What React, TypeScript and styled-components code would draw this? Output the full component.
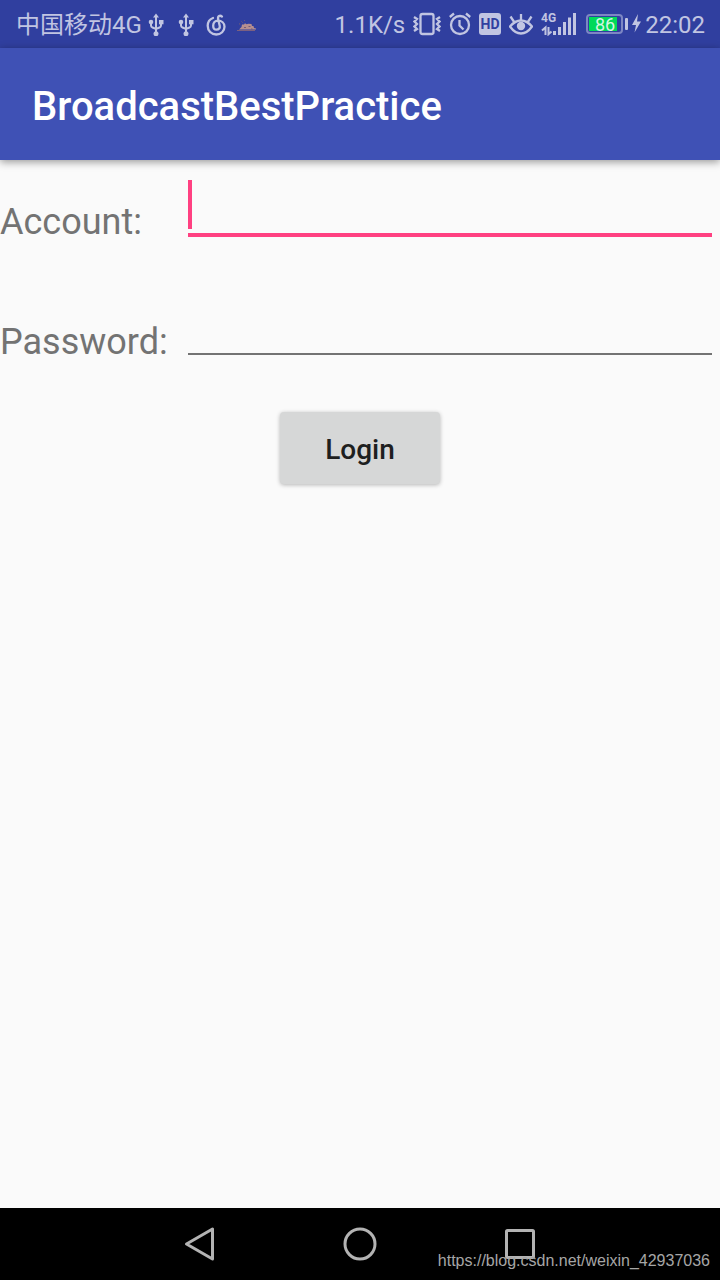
import React from 'react';
import styled, { createGlobalStyle } from 'styled-components';

const GlobalStyle = createGlobalStyle`
  *, *::before, *::after { box-sizing: border-box; }
  body {
    margin: 0;
    background: #fafafa;
    font-family: Roboto, "Noto Sans CJK SC", sans-serif;
  }
`;

const Screen = styled.div`
  display: flex;
  flex-direction: column;
  min-height: 100vh;
`;

const StatusBar = styled.div`
  display: flex;
  justify-content: space-between;
  align-items: center;
  height: 48px;
  padding: 0 15px 0 16px;
  background: #303f9f;
  color: #c1c5e2;
  font-size: 24px;
  line-height: 28px;
  white-space: nowrap;
`;

const StatusGroup = styled.div<{ $gap: number }>`
  display: flex;
  align-items: center;
  gap: ${(p) => p.$gap}px;
`;

const StatusText = styled.span`
  padding-top: 2px;
`;

const StatusIcon = styled.svg`
  display: block;
  flex: none;
  fill: none;
  stroke: currentColor;
`;

const SmallLabel = styled.text<{ $fill?: string }>`
  font-family: Roboto, sans-serif;
  font-weight: 700;
  stroke: none;
  fill: ${(p) => p.$fill ?? 'currentColor'};
`;

const BatteryShell = styled.div`
  display: flex;
  width: 37px;
  height: 20px;
  padding: 1px;
  border: 2px solid #7d87c3;
  border-radius: 4px;
`;

const BatteryLevel = styled.div`
  width: 28px;
  background: #00d95a;
  color: #d5f5e4;
  font-size: 18px;
  line-height: 15px;
  text-align: right;
  padding-right: 2px;
`;

const BatteryCap = styled.div`
  width: 3px;
  height: 12px;
  border-radius: 1px;
  background: currentColor;
`;

const AppBar = styled.header`
  display: flex;
  align-items: center;
  height: 112px;
  padding: 6px 32px 0;
  background: #3f51b5;
  box-shadow: 0 2px 8px rgba(0, 0, 0, 0.4);
`;

const Title = styled.h1`
  margin: 0;
  color: #fff;
  font-size: 40px;
  font-weight: 500;
  line-height: 48px;
`;

const Form = styled.form`
  flex: 1;
  display: flex;
  flex-direction: column;
`;

const Row = styled.div`
  display: flex;
  height: 120px;
  padding: 20px 8px 0 0;
`;

const Label = styled.label`
  width: 188px;
  padding-top: 20px;
  color: #737373;
  font-size: 36px;
  line-height: 44px;
`;

const Field = styled.div`
  position: relative;
  flex: 1;
`;

const Input = styled.input<{ $active?: boolean }>`
  display: block;
  width: 100%;
  height: ${(p) => (p.$active ? 57 : 55)}px;
  padding: 0 0 4px;
  border: 0;
  border-bottom: ${(p) => (p.$active ? '4px solid #ff4081' : '2px solid #737373')};
  outline: 0;
  background: transparent;
  caret-color: transparent;
  font: inherit;
  font-size: 36px;
`;

const Caret = styled.span`
  position: absolute;
  top: 0;
  left: 0;
  width: 4px;
  height: 49px;
  background: #ff4081;
`;

const LoginButton = styled.button`
  align-self: center;
  width: 160px;
  height: 72px;
  margin-top: 12px;
  padding: 4px 0 0;
  border: 0;
  border-radius: 4px;
  background: #d6d7d7;
  box-shadow: 0 1px 4px rgba(0, 0, 0, 0.28);
  color: #1e1f1f;
  font: 500 28px/32px Roboto, sans-serif;
`;

const NavBar = styled.nav`
  position: relative;
  display: flex;
  justify-content: center;
  height: 72px;
  background: #000;
`;

const NavButton = styled.button`
  display: flex;
  align-items: center;
  justify-content: center;
  width: 160px;
  padding: 0;
  border: 0;
  background: none;
  color: #b3b3b3;
`;

const Watermark = styled.span`
  position: absolute;
  right: 10px;
  bottom: 9px;
  color: #a6a6a6;
  font: 16px/20px "Liberation Sans", Arial, sans-serif;
`;

const UsbIcon = () => (
  <StatusIcon width="24" height="24" viewBox="0 0 24 24" strokeWidth="2">
    <path d="M12 4v17M7 10v3.500q0 1.500 1.500 2L12 17l3.500-1.500q1.500-.5 1.500-2V10" />
    <path d="M12 1.500l3 4H9z" fill="currentColor" stroke="none" />
    <circle cx="7" cy="10" r="2.300" fill="currentColor" stroke="none" />
    <path d="M15 8h4.500v4.300H15z" fill="currentColor" stroke="none" />
    <circle cx="12" cy="21.800" r="2.500" fill="currentColor" stroke="none" />
  </StatusIcon>
);

const MusicIcon = () => (
  <StatusIcon width="24" height="24" viewBox="0 0 24 24" strokeWidth="2.300" strokeLinecap="round">
    <path d="M9 6C5.800 7.200 3.700 10.200 3.700 13.800C3.700 18.800 7.300 22.500 12.200 22.500C17 22.500 20.500 19 20.500 14.800C20.500 11 17.600 8.600 14 8.600C11 8.600 9.200 10.800 9.200 13.700C9.200 16.300 10.600 17.700 12.500 17.700C14.800 17.700 16.200 16 15.700 13.800L14.200 7.500C13.400 4 16 2.800 18 4.600" />
  </StatusIcon>
);

const CritterIcon = () => (
  <StatusIcon width="24" height="24" viewBox="0 0 24 24" stroke="none">
    <path d="M5 17.500L7.500 15l.5-2.500h2l1-1.300 1.500 1 2-.4 3 .2.500 2h1.500l.5 2 2 .5v1H4z" fill="#b58f90" stroke="none" />
    <path d="M3 18.500h18" stroke="#7c6080" strokeWidth="1" />
    <path d="M5 11.500l1.200 1M7.500 9.500l1 1M10 8l.8.8M10 15.500h2M14.500 14.500h2M17 17h1.500" stroke="#745c78" strokeWidth="1" />
  </StatusIcon>
);

const VibrateIcon = () => (
  <StatusIcon width="28" height="24" viewBox="0 0 28 24" strokeWidth="2.300">
    <rect x="7.500" y="2" width="13" height="20" rx="2" />
    <path d="M1 5L4 7 1.500 9.500 4 12l-2.500 2.500L4 17l-3 2M27 5l-3 2 2.500 2.500L24 12l2.500 2.500L24 17l3 2" />
  </StatusIcon>
);

const AlarmIcon = () => (
  <StatusIcon width="22" height="24" viewBox="0 0 22 24" strokeWidth="2.300">
    <circle cx="11" cy="13" r="9" />
    <path d="M.8 5L5 1.500M21.200 5L17 1.500M10.500 8v5.500l4 4" />
  </StatusIcon>
);

const HdIcon = () => (
  <StatusIcon width="22" height="24" viewBox="0 0 22 24">
    <rect width="22" height="22" y="1" rx="3" fill="currentColor" stroke="none" />
    <SmallLabel x="11" y="17" fontSize="14" textAnchor="middle" $fill="#303f9f">HD</SmallLabel>
  </StatusIcon>
);

const EyeIcon = () => (
  <StatusIcon width="24" height="24" viewBox="0 0 24 24" strokeWidth="2.300">
    <path d="M1 14.500Q6 8.500 12 8.500T23 14.500Q18 21.500 12 21.500T1 14.500z" />
    <circle cx="12" cy="14" r="4.200" fill="currentColor" stroke="none" />
    <path d="M12 2v6M1.500 4.500l4 6M22.500 4.500l-4 6" />
  </StatusIcon>
);

const SignalIcon = () => (
  <StatusIcon width="37" height="24" viewBox="0 0 37 24" strokeWidth="3">
    <SmallLabel x="0" y="10" fontSize="12">4G</SmallLabel>
    <path d="M13.500 19v4M18.500 15v8M23.500 10v13M28.500 5.500V23M33.500 1v22" />
    <path d="M4.500 23v-7.500L1 18.500M7.500 15v7.200l3-2.700" strokeWidth="2" />
  </StatusIcon>
);

const BoltIcon = () => (
  <StatusIcon width="13" height="24" viewBox="0 0 13 24">
    <path d="M8 2L2 13h4L4.500 20.500 11 9.500H7z" fill="currentColor" stroke="none" />
  </StatusIcon>
);

export default function App() {
  return (
    <Screen>
      <GlobalStyle />
      <StatusBar>
        <StatusGroup $gap={2}>
          <StatusText>中国移动4G</StatusText>
          <StatusGroup $gap={6}>
            <UsbIcon />
            <UsbIcon />
            <MusicIcon />
            <CritterIcon />
          </StatusGroup>
        </StatusGroup>
        <StatusGroup $gap={8}>
          <StatusText>1.1K/s</StatusText>
          <VibrateIcon />
          <AlarmIcon />
          <HdIcon />
          <EyeIcon />
          <SignalIcon />
          <StatusGroup $gap={2}>
            <BatteryShell>
              <BatteryLevel>86</BatteryLevel>
            </BatteryShell>
            <BatteryCap />
            <BoltIcon />
            <StatusText>22:02</StatusText>
          </StatusGroup>
        </StatusGroup>
      </StatusBar>
      <AppBar>
        <Title>BroadcastBestPractice</Title>
      </AppBar>
      <Form onSubmit={(e) => e.preventDefault()}>
        <Row>
          <Label htmlFor="account">Account:</Label>
          <Field>
            <Input id="account" type="text" $active />
            <Caret />
          </Field>
        </Row>
        <Row>
          <Label htmlFor="password">Password:</Label>
          <Field>
            <Input id="password" type="password" />
          </Field>
        </Row>
        <LoginButton type="submit">Login</LoginButton>
      </Form>
      <NavBar>
        <NavButton type="button" aria-label="Back">
          <svg width="36" height="36" fill="none" stroke="currentColor" strokeWidth="3" strokeLinejoin="round">
            <path d="M4.500 18L30.500 3v30z" />
          </svg>
        </NavButton>
        <NavButton type="button" aria-label="Home">
          <svg width="36" height="36" fill="none" stroke="currentColor" strokeWidth="3">
            <circle cx="18" cy="18" r="15" />
          </svg>
        </NavButton>
        <NavButton type="button" aria-label="Recent apps">
          <svg width="36" height="36" fill="none" stroke="currentColor" strokeWidth="3">
            <rect x="4.500" y="4.500" width="27" height="27" rx="1" />
          </svg>
        </NavButton>
        <Watermark>https://blog.csdn.net/weixin_42937036</Watermark>
      </NavBar>
    </Screen>
  );
}
